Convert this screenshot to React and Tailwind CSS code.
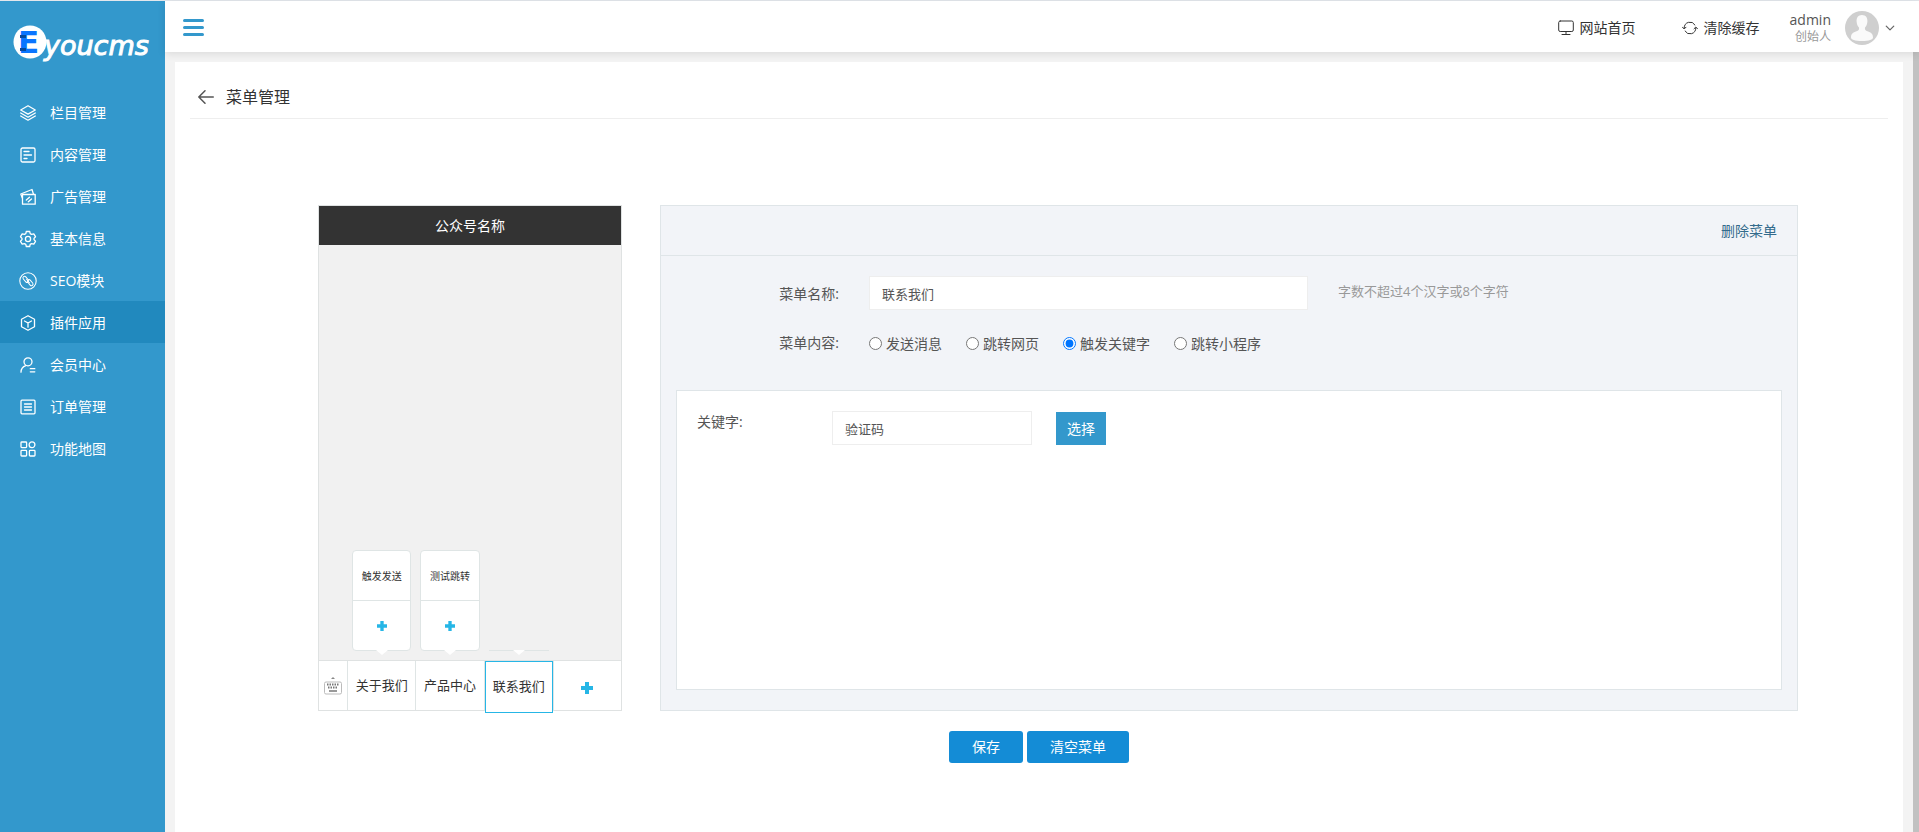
import React, { useState } from "react";

const iconProps = {
  viewBox: "0 0 16 16",
  fill: "none",
  stroke: "currentColor",
  strokeWidth: "1.3",
  strokeLinecap: "round",
  strokeLinejoin: "round",
  "aria-hidden": true,
};

const icons = {
  layers: (
    <>
      <path d="M8 .8 15.3 5 8 9.1.7 5Z" />
      <path d="M.7 8 8 12.2 15.3 8M.7 11 8 15.2l7.3-4.2" />
    </>
  ),
  article: (
    <>
      <rect x="1" y="1" width="14" height="14" rx="1.5" />
      <path d="M4 4.5h5M4 8h7.5M4 11.5h3" />
    </>
  ),
  ads: (
    <>
      <path d="M2.5 5.5h12.7v9.7H2.5z" />
      <path d="M2.3 9 .8 5 12 .5l1.4 4.500M6.300 11l3.200-2.800M8.300 12.700l3.200-2.800" />
    </>
  ),
  gear: (
    <>
      <path d="M6.3.5h3.4l.5 2.1 1.4.8 2.200-.6 1.700 2.900L14 7.400v1.200l1.500 1.700-1.700 2.900-2.200-.6-1.400.8-.5 2.100H6.300l-.5-2.100-1.400-.8-2.200.6L.5 10.300 2 8.600V7.400L.5 5.700l1.700-2.900 2.200.6 1.400-.8Z" />
      <circle cx="8" cy="8" r="2.6" />
    </>
  ),
  link: (
    <>
      <circle cx="8" cy="8" r="8.2" strokeWidth="1.1" />
      <rect x="2.3" y="4.8" width="7" height="3.2" rx="1.6" transform="rotate(50 5.8 6.4)" strokeWidth="1" />
      <rect x="6.7" y="8" width="7" height="3.2" rx="1.6" transform="rotate(50 10.2 9.6)" strokeWidth="1" />
      <path d="m6.5 6.500 3 3.200" strokeWidth="1" />
    </>
  ),
  cube: (
    <>
      <path d="M8 .7 14.5 4.2v7.6L8 15.3l-6.5-3.5V4.2Z" />
      <path d="M4.5 6 8 8l3.5-2M8 8v4.2" />
    </>
  ),
  member: (
    <>
      <circle cx="8" cy="4.8" r="4" />
      <path d="M1 15.2c0-3.5 2-5.7 4.8-6.6M10.3 11.7h4.5M10.3 14.8h4.5" />
    </>
  ),
  order: (
    <>
      <rect x="1" y="1.2" width="14" height="13.6" rx="1" />
      <path d="M4.5 5h7M4.5 8h7M4.5 11h7" />
    </>
  ),
  grid: (
    <>
      <rect x="1" y="1" width="5.6" height="5.6" rx=".8" />
      <circle cx="12" cy="3.8" r="2.9" />
      <rect x="1" y="9.4" width="5.6" height="5.6" rx=".8" />
      <rect x="9.4" y="9.4" width="5.6" height="5.6" rx=".8" />
    </>
  ),
};

const navItems = [
  { label: "栏目管理", icon: "layers" },
  { label: "内容管理", icon: "article" },
  { label: "广告管理", icon: "ads" },
  { label: "基本信息", icon: "gear" },
  { label: "SEO模块", icon: "link" },
  { label: "插件应用", icon: "cube", active: true },
  { label: "会员中心", icon: "member" },
  { label: "订单管理", icon: "order" },
  { label: "功能地图", icon: "grid" },
];

const menus = [
  { label: "关于我们", children: ["触发发送"] },
  { label: "产品中心", children: ["测试跳转"] },
  { label: "联系我们", children: [] },
];

const contentTypes = ["发送消息", "跳转网页", "触发关键字", "跳转小程序"];

const Logo = () => (
  <svg className="mt-5 ml-3 h-11 w-36" viewBox="0 0 144 44" role="img" aria-label="Eyoucms">
    <circle cx="18" cy="21" r="16.5" fill="#fff" />
    <text x="6" y="32" fontFamily="DejaVu Sans, sans-serif" fontWeight="700" fontSize="31" fill="#0a75ff">
      E
    </text>
    <path d="M8 14h6v3H8zM8 27h6v3H8z" fill="#064a9e" />
    <text
      x="32"
      y="34"
      fontFamily="DejaVu Sans, sans-serif"
      fontStyle="italic"
      fontSize="27"
      fill="#fff"
      stroke="#fff"
      strokeWidth="1"
    >
      youcms
    </text>
  </svg>
);

const Plus = ({ className }) => (
  <svg className={className} viewBox="0 0 12 12" aria-hidden="true">
    <path d="M4 0h4v4h4v4H8v4H4V8H0V4h4z" fill="#26b6e6" />
  </svg>
);

const Keyboard = () => (
  <svg className="h-5 w-5" viewBox="0 0 20 20" aria-hidden="true">
    <path d="M8 3 10 1l2 2z" fill="#888" />
    <rect x="1.5" y="6" width="17" height="12" rx="1.5" fill="#fff" stroke="#bbb" />
    <path d="M4 8.5h12M5 11.5h10" stroke="#777" strokeWidth="2" strokeDasharray="1.5 1" />
    <path d="M6 15h8" stroke="#777" strokeWidth="1.5" />
  </svg>
);

const Sidebar = () => (
  <aside className="w-[165px] shrink-0 bg-[#3398cc] text-white">
    <Logo />
    <nav className="mt-[26px]">
      {navItems.map((item) => (
        <a
          key={item.label}
          href="#"
          className={`flex h-[42px] items-center gap-3.5 pt-0.5 pl-5 text-sm ${item.active ? "bg-[#2189be]" : ""}`}
        >
          <svg {...iconProps} className="h-4 w-4 overflow-visible">
            {icons[item.icon]}
          </svg>
          {item.label}
        </a>
      ))}
    </nav>
  </aside>
);

const Header = () => (
  <header className="z-10 flex h-[51px] shrink-0 items-center justify-between bg-white pt-0.5 pr-6 pl-[18px] shadow-[0_2px_8px_rgba(0,0,0,0.1)]">
    <button type="button" aria-label="切换菜单" className="flex w-[21px] flex-col gap-1">
      <span className="h-[3px] rounded-xs bg-[#3398cc]" />
      <span className="h-[3px] rounded-xs bg-[#3398cc]" />
      <span className="h-[3px] rounded-xs bg-[#3398cc]" />
    </button>
    <div className="flex items-center text-sm text-[#333]">
      <a href="#" className="mr-[46px] flex items-center gap-1.5">
        <svg {...iconProps} strokeWidth="1" className="h-4 w-4">
          <rect x=".7" y="1" width="14.6" height="10.5" rx="1.5" />
          <path d="M8 11.5v3M4 14.5h8" />
        </svg>
        网站首页
      </a>
      <a href="#" className="mr-[30px] flex items-center gap-1.5">
        <svg {...iconProps} strokeWidth="1" className="h-4 w-4">
          <path d="M2.2 8A5.8 5.8 0 0 1 13 5M13.8 8A5.8 5.8 0 0 1 3 11" />
          <path d="M.5 7.2 2.2 9 4 7.2M12 8.8 13.8 7l1.7 1.8" />
        </svg>
        清除缓存
      </a>
      <div className="mr-3.5 flex flex-col items-end">
        <span className="leading-[18px] text-[#555]">admin</span>
        <span className="text-xs leading-4 text-[#999]">创始人</span>
      </div>
      <svg className="h-[34px] w-[34px]" viewBox="0 0 34 34" aria-hidden="true">
        <circle cx="17" cy="17" r="17" fill="#cfcfcf" />
        <path
          d="M17 4c3.8 0 5.6 2.8 5.4 6.5-.2 3-1.2 4.8-2.4 6.1-.4 2.2.5 3 2.5 3.7 3.6 1.2 5.5 2.5 5.5 6.2 0 2-4 3.5-11 3.5S6 28.5 6 26.5c0-3.7 1.9-5 5.5-6.2 2-.7 2.9-1.5 2.5-3.7-1.2-1.3-2.2-3.1-2.4-6.1C11.4 6.8 13.2 4 17 4Z"
          fill="#fafafa"
        />
      </svg>
      <svg {...iconProps} className="ml-1.5 h-2.5 w-2.5 text-[#666]">
        <path d="m2 5 6 6 6-6" strokeWidth="2" />
      </svg>
    </div>
  </header>
);

const SubMenu = ({ items }) => (
  <div className="absolute inset-x-1 bottom-full mb-2.5">
    {items.length > 0 ? (
      <div className="rounded border border-[#dfe5e5] bg-white">
        {items.map((item) => (
          <div key={item} className="flex h-[50px] items-center justify-center border-b border-[#dfe5e5] pt-0.5 text-[10px]">
            {item}
          </div>
        ))}
        <button type="button" aria-label="添加子菜单" className="flex h-[49px] w-full items-center justify-center">
          <Plus className="h-2.5 w-2.5" />
        </button>
      </div>
    ) : (
      <div className="border-t border-[#dfe5e5]" />
    )}
    <svg className="absolute top-full left-1/2 -mt-px h-[5px] w-3 -translate-x-1/2" viewBox="0 0 12 5" aria-hidden="true">
      <path d="M0 0h12L6 5z" fill="#fff" />
    </svg>
  </div>
);

const PhonePreview = ({ current, name, onSelect }) => (
  <section className="flex h-[506px] w-[304px] shrink-0 flex-col border border-[#dfe2e2] bg-[#f1f1f1] text-[#333]">
    <h2 className="flex h-[39px] items-center justify-center bg-[#333] text-sm text-white">公众号名称</h2>
    <div className="flex-1" />
    <div className="flex h-[50px] border-t border-[#dfe2e2] bg-white">
      <div className="flex w-7 items-center justify-center">
        <Keyboard />
      </div>
      {menus.map((menu, index) => (
        <div key={menu.label} className="relative flex-1 border-l border-[#dfe5e5]">
          <SubMenu items={menu.children} />
          <button
            type="button"
            onClick={() => onSelect(index)}
            className={`text-[13px] whitespace-nowrap ${
              index === current
                ? "relative h-[52px] w-[68px] border border-[#26b6e6] bg-white"
                : "h-full w-full"
            }`}
          >
            {index === current ? name : menu.label}
          </button>
        </div>
      ))}
      <button type="button" aria-label="添加菜单" className="flex flex-1 items-center justify-center border-l border-[#dfe5e5] pt-1">
        <Plus className="h-3 w-3" />
      </button>
    </div>
  </section>
);

const MenuForm = ({ name, setName }) => {
  const [type, setType] = useState("触发关键字");
  const [keyword, setKeyword] = useState("验证码");

  return (
    <section className="flex min-h-[506px] flex-1 flex-col border border-[#dfe5e8] bg-[#f2f4f8] text-sm text-[#555]">
      <div className="flex h-[50px] items-center justify-end border-b border-[#dfe5e8] px-5">
        <a href="#" className="text-[#336b8c]">
          删除菜单
        </a>
      </div>
      <div className="mt-5 flex h-[34px] items-center">
        <label htmlFor="menu-name" className="w-[178px] shrink-0 pt-0.5 text-right">
          菜单名称:
        </label>
        <input
          id="menu-name"
          type="text"
          value={name}
          onChange={(e) => setName(e.target.value)}
          className="ml-[30px] h-[34px] w-[439px] border border-[#eee] bg-white px-3 text-[13px]"
        />
        <span className="ml-[30px] pb-1 text-[13px] text-[#999]">字数不超过4个汉字或8个字符</span>
      </div>
      <div role="radiogroup" aria-labelledby="content-label" className="mt-[22px] flex h-6 items-center">
        <span id="content-label" className="w-[178px] shrink-0 pb-0.5 text-right">
          菜单内容:
        </span>
        <div className="ml-[30px] flex gap-6">
          {contentTypes.map((item) => (
            <label key={item} className="flex items-center gap-1">
              <input
                type="radio"
                name="content-type"
                checked={type === item}
                onChange={() => setType(item)}
                className="mb-0.5 h-[13px] w-[13px]"
              />
              {item}
            </label>
          ))}
        </div>
      </div>
      <div className="mx-[15px] mt-[34px] mb-5 flex flex-1 items-start border border-[#dfe5e8] bg-white px-5 pt-5">
        <label htmlFor="keyword" className="w-[135px] shrink-0 pt-px">
          关键字:
        </label>
        <input
          id="keyword"
          type="text"
          value={keyword}
          onChange={(e) => setKeyword(e.target.value)}
          className="h-[34px] w-[200px] border border-[#eee] bg-white px-3 text-[13px]"
        />
        <button type="button" className="mt-px ml-6 h-[33px] w-[50px] bg-[#3398cc] text-white">
          选择
        </button>
      </div>
    </section>
  );
};

const App = () => {
  const [current, setCurrent] = useState(2);
  const [name, setName] = useState(menus[2].label);

  const handleSelect = (index) => {
    setCurrent(index);
    setName(menus[index].label);
  };

  return (
    <div className="flex min-h-screen border-t border-[#e3e7ec] font-['Open_Sans','Noto_Sans_CJK_SC',sans-serif]">
      <Sidebar />
      <div className="flex min-w-0 flex-1 flex-col">
        <Header />
        <div className="flex flex-1 bg-[#f3f3f3]">
          <main className="mx-2.5 mt-2.5 flex-1 bg-white px-[15px]">
            <div className="flex h-[57px] items-center gap-3 border-b border-[#eee] pt-3.5 pl-2">
              <a href="#" aria-label="返回">
                <svg {...iconProps} strokeWidth="1.5" className="h-4 w-4 text-[#555]">
                  <path d="M15.3 8H.8M7 1.8.8 8 7 14.2" />
                </svg>
              </a>
              <h1 className="text-base text-[#333]">菜单管理</h1>
            </div>
            <div className="mt-[86px] flex gap-[38px] pr-[90px] pl-32">
              <PhonePreview current={current} name={name} onSelect={handleSelect} />
              <MenuForm name={name} setName={setName} />
            </div>
            <div className="mt-5 flex justify-center gap-1 text-sm text-white">
              <button type="button" className="h-8 w-[74px] rounded-[3px] bg-[#148cd6]">
                保存
              </button>
              <button type="button" className="h-8 w-[102px] rounded-[3px] bg-[#148cd6]">
                清空菜单
              </button>
            </div>
          </main>
          <div className="w-1.5 bg-[#c1c1c1]" />
        </div>
      </div>
    </div>
  );
};

export default App;
